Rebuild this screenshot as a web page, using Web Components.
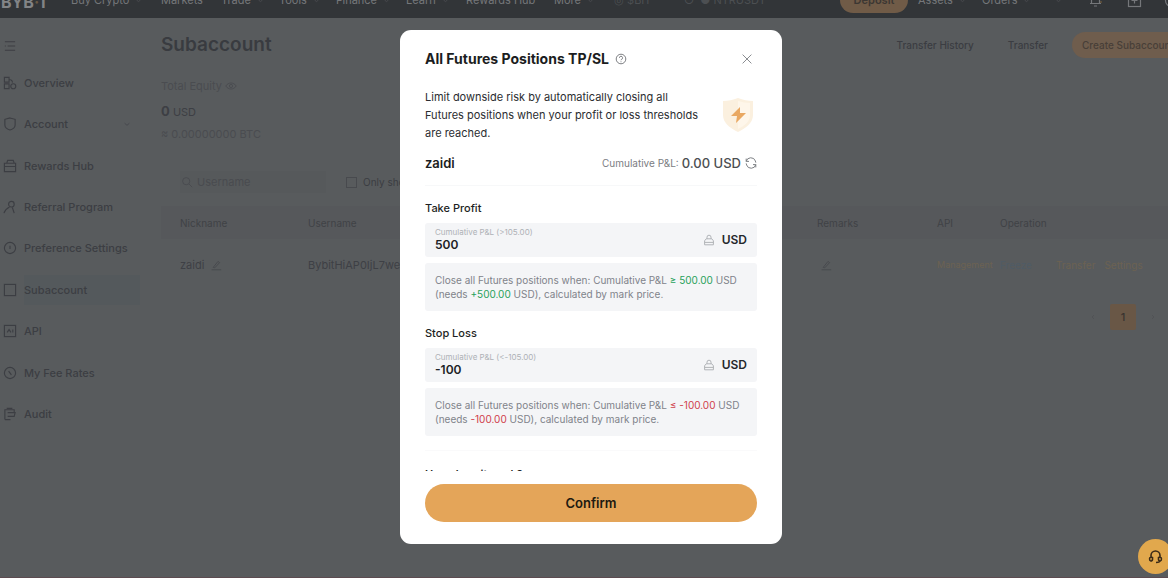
<!DOCTYPE html>
<html lang="en">
<head>
<meta charset="utf-8">
<title>Subaccount</title>
<style>
html, body { margin: 0; height: 100%; overflow: hidden; }
body { font-family: Inter, "Liberation Sans", sans-serif; background: #585b5d; color: #3b3d42; }
</style>
</head>
<body>
<account-page></account-page>
<script>
const define = (name, html, setup) => customElements.define(name, class extends HTMLElement {
  connectedCallback() {
    if (this.shadowRoot) return;
    const root = this.attachShadow({ mode: 'open' });
    const t = document.createElement('template');
    t.innerHTML = html;
    root.append(t.content.cloneNode(true));
    if (setup) setup(this, root);
  }
});

const icons = {
  menu: '<path d="M2 3h11M5 7.5h8M2 12h11M2 7.5h1"/>',
  overview: '<path d="M1.5 1.5h5v5h-5zM1.5 8.5h5v5h-5zM6.500 4h1a2.500 2.500 0 0 1 2.500 3"/><circle cx="11" cy="11" r="2.700"/>',
  shield: '<path d="M7.500 1l5.500 1.500v6c0 2.500-2.500 4.500-5.500 5.500C4.500 13 2 11 2 8.500v-6z"/>',
  gift: '<path d="M1.500 4.500h12v9h-12zM4 4.500l1-3h6l1 3M1.500 8h12"/>',
  person: '<circle cx="9" cy="4.500" r="3"/><path d="M1 14c1-3 3-5 6-6.500M10 8l2 6"/>',
  clock: '<circle cx="7.500" cy="7.500" r="6"/><path d="M7.500 5v3.500"/>',
  square: '<rect x="1.500" y="1.500" width="12" height="12"/>',
  api: '<rect x="1.500" y="1.500" width="12" height="12"/><path d="M4.500 9l2-3 2 3M10.500 6v3"/>',
  fee: '<circle cx="7.500" cy="7.500" r="6"/><path d="M6 5.500l3 4"/>',
  audit: '<path d="M2 13.500V3h10v3M4 1.500h6M5 6h8l-1 4H5M2 13.500h6"/>',
  eye: '<path d="M1 7.500c3-5 10-5 13 0-3 5-10 5-13 0z"/><circle cx="7.500" cy="7.500" r="2"/>',
  search: '<circle cx="6.500" cy="6.500" r="4.500"/><path d="M10 10l4 4"/>',
  edit: '<path d="M4 10.500l6-7.500 2 1.500-6 6.500zM2 13.500h12"/>',
  bell: '<path d="M2 10.500h11M3.500 10.500v-5a4 4 0 0 1 8 0v5M6 13h3"/><path d="M12 9h2" stroke="#7d6038"/>',
  inbox: '<rect x="1.500" y="1.500" width="12" height="12"/><path d="M7.500 4.500v6M4.500 7.500h6"/>',
  help: '<circle cx="7.500" cy="7.500" r="6"/><path d="M5.500 6a2 2 0 1 1 2.500 2l-.5 1M7.500 10.500v1"/>',
  close: '<path d="M2 2l11 11M13 2L2 13"/>',
  refresh: '<path d="M1.500 5.500A6 6 0 0 1 13 5l.5 2M13.500 9.500A6 6 0 0 1 2 10l-.5-2M1.500 2v3.500H5M13.500 13V9.500H10"/>',
  lock: '<path d="M2 8.500L4 6h7l2 2.500v5H2zM5 6V4a2.500 2.500 0 0 1 5 0v2M2 10.500h11"/>',
  down: '<path d="M3 6l4.500 4L12 6"/>',
  left: '<path d="M9 4L6 7.500 9 11"/>',
  right: '<path d="M6 4l3 3.500L6 11"/>',
  headset: '<path d="M3 9V6.500a4.500 4.500 0 0 1 9 0V9M3 8a1.500 2 0 1 0 1.500 2.500V8.500zM12 8a1.500 2 0 1 1-1.500 2.500V8.500zM12 11.500c0 1.500-1.500 2-4 2"/>'
};

define('ui-icon', `<style>
  :host { display: inline-block; width: 15px; height: 15px; flex: none; }
  svg { display: block; width: 100%; height: 100%; fill: none; stroke: currentColor; stroke-width: var(--stroke, 1.2); }
</style><svg viewBox="0 0 15 15" aria-hidden="true"></svg>`,
  (el, root) => { root.querySelector('svg').innerHTML = icons[el.getAttribute('name')]; });

define('top-bar', `<style>
  :host { display: block; height: 18px; overflow: hidden; background: #323538; color: #75777a; font-size: 11px; line-height: 16px; }
  header { display: grid; grid-template-columns: 71px 90px 60px 58px 57px 70px 60px 88px 60px 70px 1fr auto; align-items: center; height: 36px; margin-top: -18px; box-sizing: border-box; white-space: nowrap; }
  a { color: inherit; text-decoration: none; }
  .logo { font-size: 16px; font-weight: 700; line-height: 18px; padding: 4px 0 0 1px; color: #828486; }
  .logo i { font-style: normal; color: #6b5a45; }
  ui-icon.caret { width: 7px; height: 7px; margin-left: 6px; color: #5a5c5f; }
  .dim { color: #4c4f52; }
  nav { display: grid; grid-template-columns: 78px 64px 67px 39px 39px 37px 4px; align-items: center; }
  button { border: 0; width: 68px; height: 26px; border-radius: 13px; background: #705b47; color: #3c3733; font: 600 11px/16px Inter, sans-serif; padding: 0; }
</style>
<header>
  <a class="logo" href="#">BYB<i>·</i>T</a>
  <a href="#">Buy Crypto<ui-icon class="caret" name="down"></ui-icon></a>
  <a href="#">Markets</a>
  <a href="#">Trade<ui-icon class="caret" name="down"></ui-icon></a>
  <a href="#">Tools<ui-icon class="caret" name="down"></ui-icon></a>
  <a href="#">Finance<ui-icon class="caret" name="down"></ui-icon></a>
  <a href="#">Learn<ui-icon class="caret" name="down"></ui-icon></a>
  <a href="#">Rewards Hub</a>
  <a href="#">More<ui-icon class="caret" name="down"></ui-icon></a>
  <a class="dim" href="#">◎ $BIT</a>
  <a class="dim" href="#">○ &nbsp;● NTRUSDT</a>
  <nav>
    <button>Deposit</button>
    <a href="#">Assets<ui-icon class="caret" name="down"></ui-icon></a>
    <a href="#">Orders<ui-icon class="caret" name="down"></ui-icon></a>
    <ui-icon class="caret" name="down"></ui-icon>
    <ui-icon name="bell"></ui-icon>
    <ui-icon name="inbox"></ui-icon>
    <ui-icon name="clock"></ui-icon>
  </nav>
</header>`);

define('side-item', `<style>
  :host { display: grid; align-items: center; }
  a { display: grid; grid-template-columns: 14px minmax(0, 1fr) 12px; column-gap: 7px; align-items: center; color: #3c3e43; text-decoration: none; font-size: 11px; line-height: 30px; font-weight: 500; white-space: nowrap; }
  ui-icon { width: 14px; height: 14px; }
  .more { width: 8px; height: 8px; }
  :host([active]) .label { background: #54595c; margin-right: -24px; }
</style><a href="#"><span class="label"><slot></slot></span></a>`,
  (el, root) => {
    const link = root.querySelector('a');
    link.insertAdjacentHTML('afterbegin', `<ui-icon name="${el.getAttribute('icon')}"></ui-icon>`);
    if (el.hasAttribute('expandable')) link.insertAdjacentHTML('beforeend', '<ui-icon class="more" name="down"></ui-icon>');
  });

define('side-nav', `<style>
  :host { display: block; padding: 21px 7px 0 3px; box-sizing: border-box; }
  nav { display: grid; grid-auto-rows: 1fr; height: 373px; margin-top: 9px; }
  .menu { display: block; width: 14px; height: 14px; color: #3c3e43; }
</style>
<ui-icon class="menu" name="menu"></ui-icon>
<nav>
  <side-item icon="overview">Overview</side-item>
  <side-item icon="shield" expandable>Account</side-item>
  <side-item icon="gift">Rewards Hub</side-item>
  <side-item icon="person">Referral Program</side-item>
  <side-item icon="clock">Preference Settings</side-item>
  <side-item icon="square" active>Subaccount</side-item>
  <side-item icon="api">API</side-item>
  <side-item icon="fee">My Fee Rates</side-item>
  <side-item icon="audit">Audit</side-item>
</nav>`);

define('subaccount-table', `<style>
  :host { display: block; }
  table { width: 100%; border-collapse: collapse; table-layout: fixed; font-size: 11px; line-height: 16px; white-space: nowrap; }
  th { height: 33px; padding: 0; text-align: left; font-weight: 400; font-size: 10px; background: #56585b; color: #404246; }
  td { height: 51px; padding: 0; color: #3e4045; }
  th:first-child, td:first-child { padding-left: 19px; }
  ui-icon { width: 12px; height: 12px; vertical-align: -2px; color: #47494d; margin-left: 3px; }
  a { color: #6c6252; text-decoration: none; margin-right: 9px; font-size: 10px; }
  a.api { margin: 0; font-size: 9px; }
  a.off { color: #4f5c66; margin-right: 24px; }
</style>
<table>
  <colgroup><col style="width:147px"><col style="width:509px"><col style="width:120px"><col style="width:63px"><col></colgroup>
  <thead><tr><th>Nickname</th><th>Username</th><th>Remarks</th><th>API</th><th>Operation</th></tr></thead>
  <tbody><tr><td>zaidi <ui-icon name="edit"></ui-icon></td><td>BybitHiAP0IjL7we</td><td><ui-icon name="edit"></ui-icon></td><td><a class="api" href="#">Management</a></td><td><a class="off" href="#">Freeze</a><a href="#">Transfer</a><a href="#">Settings</a></td></tr></tbody>
</table>`);

define('subaccount-view', `<style>
  :host { display: block; padding-top: 14px; min-width: 0; overflow: hidden; }
  .head { display: flex; align-items: center; height: 26px; white-space: nowrap; font-size: 10px; font-weight: 500; }
  h1 { margin: 0 auto 0 0; font-size: 19px; line-height: 24px; font-weight: 600; color: #393b40; }
  .head a { color: #3b3d42; text-decoration: none; margin-right: 34px; }
  .head a + a { margin-right: 24px; }
  .head button { flex: none; width: 112px; height: 26px; margin-right: -16px; border: 0; border-radius: 13px; background: #6f5d4d; color: #483f38; font: 500 10px/16px Inter, sans-serif; padding: 0; }
  .equity { padding-top: 18px; font-size: 11px; line-height: 20px; color: #4a4c50; }
  .equity p { margin: 0; }
  .equity .usd { font-size: 11px; line-height: 30px; color: #3d3f44; }
  .usd b { font-size: 13px; }
  .equity .btc { line-height: 14px; }
  .equity ui-icon { width: 12px; height: 12px; vertical-align: -2px; }
  .tools { display: flex; align-items: center; gap: 20px; margin: 30px 0 13px 19px; font-size: 10px; line-height: 22px; }
  .search { display: flex; align-items: center; gap: 4px; width: 146px; height: 22px; background: #56595b; color: #494b4f; }
  .search ui-icon { width: 12px; height: 12px; margin-left: 1px; }
  input[type=text] { border: 0; padding: 0; width: 100px; background: none; color: inherit; font: 11px/16px Inter, sans-serif; outline: 0; }
  input::placeholder { color: inherit; opacity: 1; }
  input[type=checkbox] { appearance: none; width: 11px; height: 11px; border: 1px solid #484a4e; margin: 0 6px 0 0; vertical-align: -2px; }
  .pages { display: flex; align-items: center; justify-content: flex-end; gap: 13px; padding: 14px 11px 0 0; color: #4b4d51; }
  .pages button { width: 26px; height: 26px; border: 0; border-radius: 2px; background: #695746; color: #38332f; font: 500 11px/16px Inter, sans-serif; padding: 0; }
  .pages ui-icon { width: 8px; height: 8px; }
</style>
<div class="head"><h1>Subaccount</h1><a href="#">Transfer History</a><a href="#">Transfer</a><button>Create Subaccount</button></div>
<div class="equity"><p>Total Equity <ui-icon name="eye"></ui-icon></p><p class="usd"><b>0</b> USD</p><p class="btc">≈ 0.00000000 BTC</p></div>
<div class="tools"><label class="search"><ui-icon name="search"></ui-icon><input type="text" placeholder="Username" aria-label="Username"></label><label><input type="checkbox">Only show</label></div>
<subaccount-table></subaccount-table>
<div class="pages"><ui-icon name="left"></ui-icon><button>1</button><ui-icon name="right"></ui-icon></div>`);

define('pnl-field', `<style>
  :host { display: block; }
  h3 { margin: 0 0 6px; font-size: 11px; line-height: 18px; font-weight: 500; color: #1d1f23; }
  .box { display: flex; align-items: center; height: 34px; padding: 0 10px; background: #f4f5f7; border-radius: 3px; color: #25272b; }
  label { flex: 1; font-size: 8px; line-height: 10px; color: #aeb1b6; }
  input { display: block; width: 100%; box-sizing: border-box; border: 0; padding: 0; background: none; outline: 0; color: #202226; font: 600 12px/16px Inter, sans-serif; height: 16px; }
  ui-icon { width: 12px; height: 12px; color: #aeb1b5; margin-right: 7px; }
  b { font-size: 12px; line-height: 16px; font-weight: 600; }
  p { margin: 6px 0 0; padding: 10px 10px; height: 28px; font-size: 10px; line-height: 14px; color: #80838a; background: #f4f5f7; border-radius: 3px; }
</style>
<h3></h3>
<div class="box"><label><span></span><input type="text"></label><ui-icon name="lock"></ui-icon><b>USD</b></div>
<p><slot></slot></p>`,
  (el, root) => {
    root.querySelector('h3').textContent = el.getAttribute('heading');
    root.querySelector('span').textContent = el.getAttribute('hint');
    root.querySelector('input').setAttribute('value', el.getAttribute('value'));
  });

define('tpsl-dialog', `<style>
  :host { position: fixed; inset: 0; display: flex; align-items: center; justify-content: center; padding: 0 0 4px 14px; }
  section { width: 382px; box-sizing: border-box; padding: 19px 25px 22px; border-radius: 11px; background: #fff; color: #1b1d21; }
  header { display: flex; align-items: center; height: 20px; }
  h2 { margin: 0; font-size: 14px; line-height: 20px; font-weight: 700; }
  header ui-icon { width: 12px; height: 12px; margin-left: 6px; color: #77797d; }
  .close { margin-left: auto; padding: 0; border: 0; background: none; width: 20px; height: 20px; display: grid; place-items: center; }
  .close ui-icon { margin: 0; width: 12px; height: 12px; color: #85878b; }
  .intro { display: flex; align-items: center; justify-content: space-between; margin-top: 19px; font-size: 11px; line-height: 18px; color: #2b2d31; }
  .intro p { margin: 0; width: 284px; }
  .intro svg { width: 34px; height: 36px; margin-right: 2px; flex: none; }
  .account { display: flex; align-items: center; margin-top: 11px; padding-bottom: 12px; border-bottom: 1px solid #f7f8f9; line-height: 20px; }
  .account b { font-size: 13px; font-weight: 600; margin-right: auto; }
  .account small { font-size: 10px; color: #7b7d82; margin-right: 3px; }
  .account span { font-size: 13px; font-weight: 500; color: #4c4e52; }
  .account ui-icon { width: 12px; height: 12px; margin-left: 4px; color: #777a7e; }
  pnl-field { margin-top: 13px; }
  .up { color: #27a15a; } .down { color: #d0404b; }
  .more { margin-top: 14px; padding-top: 14px; height: 6px; border-top: 1px solid #fafafb; overflow: hidden; }
  .more h3 { margin: 0; font-size: 11px; line-height: 18px; font-weight: 600; }
  .confirm { display: block; width: 100%; height: 38px; margin-top: 13px; border: 0; border-radius: 19px; background: #e4a559; color: #201910; font: 600 13px/18px Inter, sans-serif; }
</style>
<section role="dialog" aria-label="All Futures Positions TP/SL">
  <header><h2>All Futures Positions TP/SL</h2><ui-icon name="help"></ui-icon><button class="close" aria-label="Close"><ui-icon name="close"></ui-icon></button></header>
  <div class="intro"><p>Limit downside risk by automatically closing all Futures positions when your profit or loss thresholds are reached.</p>
    <svg viewBox="0 0 34 36" aria-hidden="true"><path d="M17 1c5 2 10 3 15 3v14c0 8-7 13-15 17C9 31 2 26 2 18V4c5 0 10-1 15-3z" fill="#fbf0df"/><path d="M17 4c4 1 8 2 12 2v12c0 7-6 11-12 14z" fill="#fef6ea"/><path d="M19 10l-9 9h6l-1 7 10-10h-6z" fill="#e9a862"/></svg></div>
  <div class="account"><b>zaidi</b><small>Cumulative P&amp;L:</small><span>0.00 USD</span><ui-icon name="refresh"></ui-icon></div>
  <pnl-field heading="Take Profit" hint="Cumulative P&amp;L (&gt;105.00)" value="500">Close all Futures positions when: Cumulative P&amp;L <span class="up">≥ 500.00</span> USD<br>(needs <span class="up">+500.00</span> USD), calculated by mark price.</pnl-field>
  <pnl-field heading="Stop Loss" hint="Cumulative P&amp;L (&lt;-105.00)" value="-100">Close all Futures positions when: Cumulative P&amp;L <span class="down">≤ -100.00</span> USD<br>(needs <span class="down">-100.00</span> USD), calculated by mark price.</pnl-field>
  <div class="more"><h3>How does it work?</h3></div>
  <button class="confirm">Confirm</button>
</section>`);

define('support-button', `<style>
  :host { position: fixed; right: -5px; bottom: 4px; }
  button { display: grid; place-items: center; width: 35px; height: 35px; border: 0; border-radius: 50%; padding: 0; background: #e1a84d; color: #3a2a17; }
  ui-icon { width: 15px; height: 15px; --stroke: 1.600; }
</style><button aria-label="Support"><ui-icon name="headset"></ui-icon></button>`);

define('account-page', `<style>
  :host { display: block; height: 100%; box-sizing: border-box; border-bottom: 1px solid #5c4b50; }
  main { display: grid; grid-template-columns: 142px minmax(0, 1fr); column-gap: 19px; }
</style>
<top-bar></top-bar>
<main><side-nav></side-nav><subaccount-view></subaccount-view></main>
<tpsl-dialog></tpsl-dialog>
<support-button></support-button>`);
</script>
</body>
</html>
